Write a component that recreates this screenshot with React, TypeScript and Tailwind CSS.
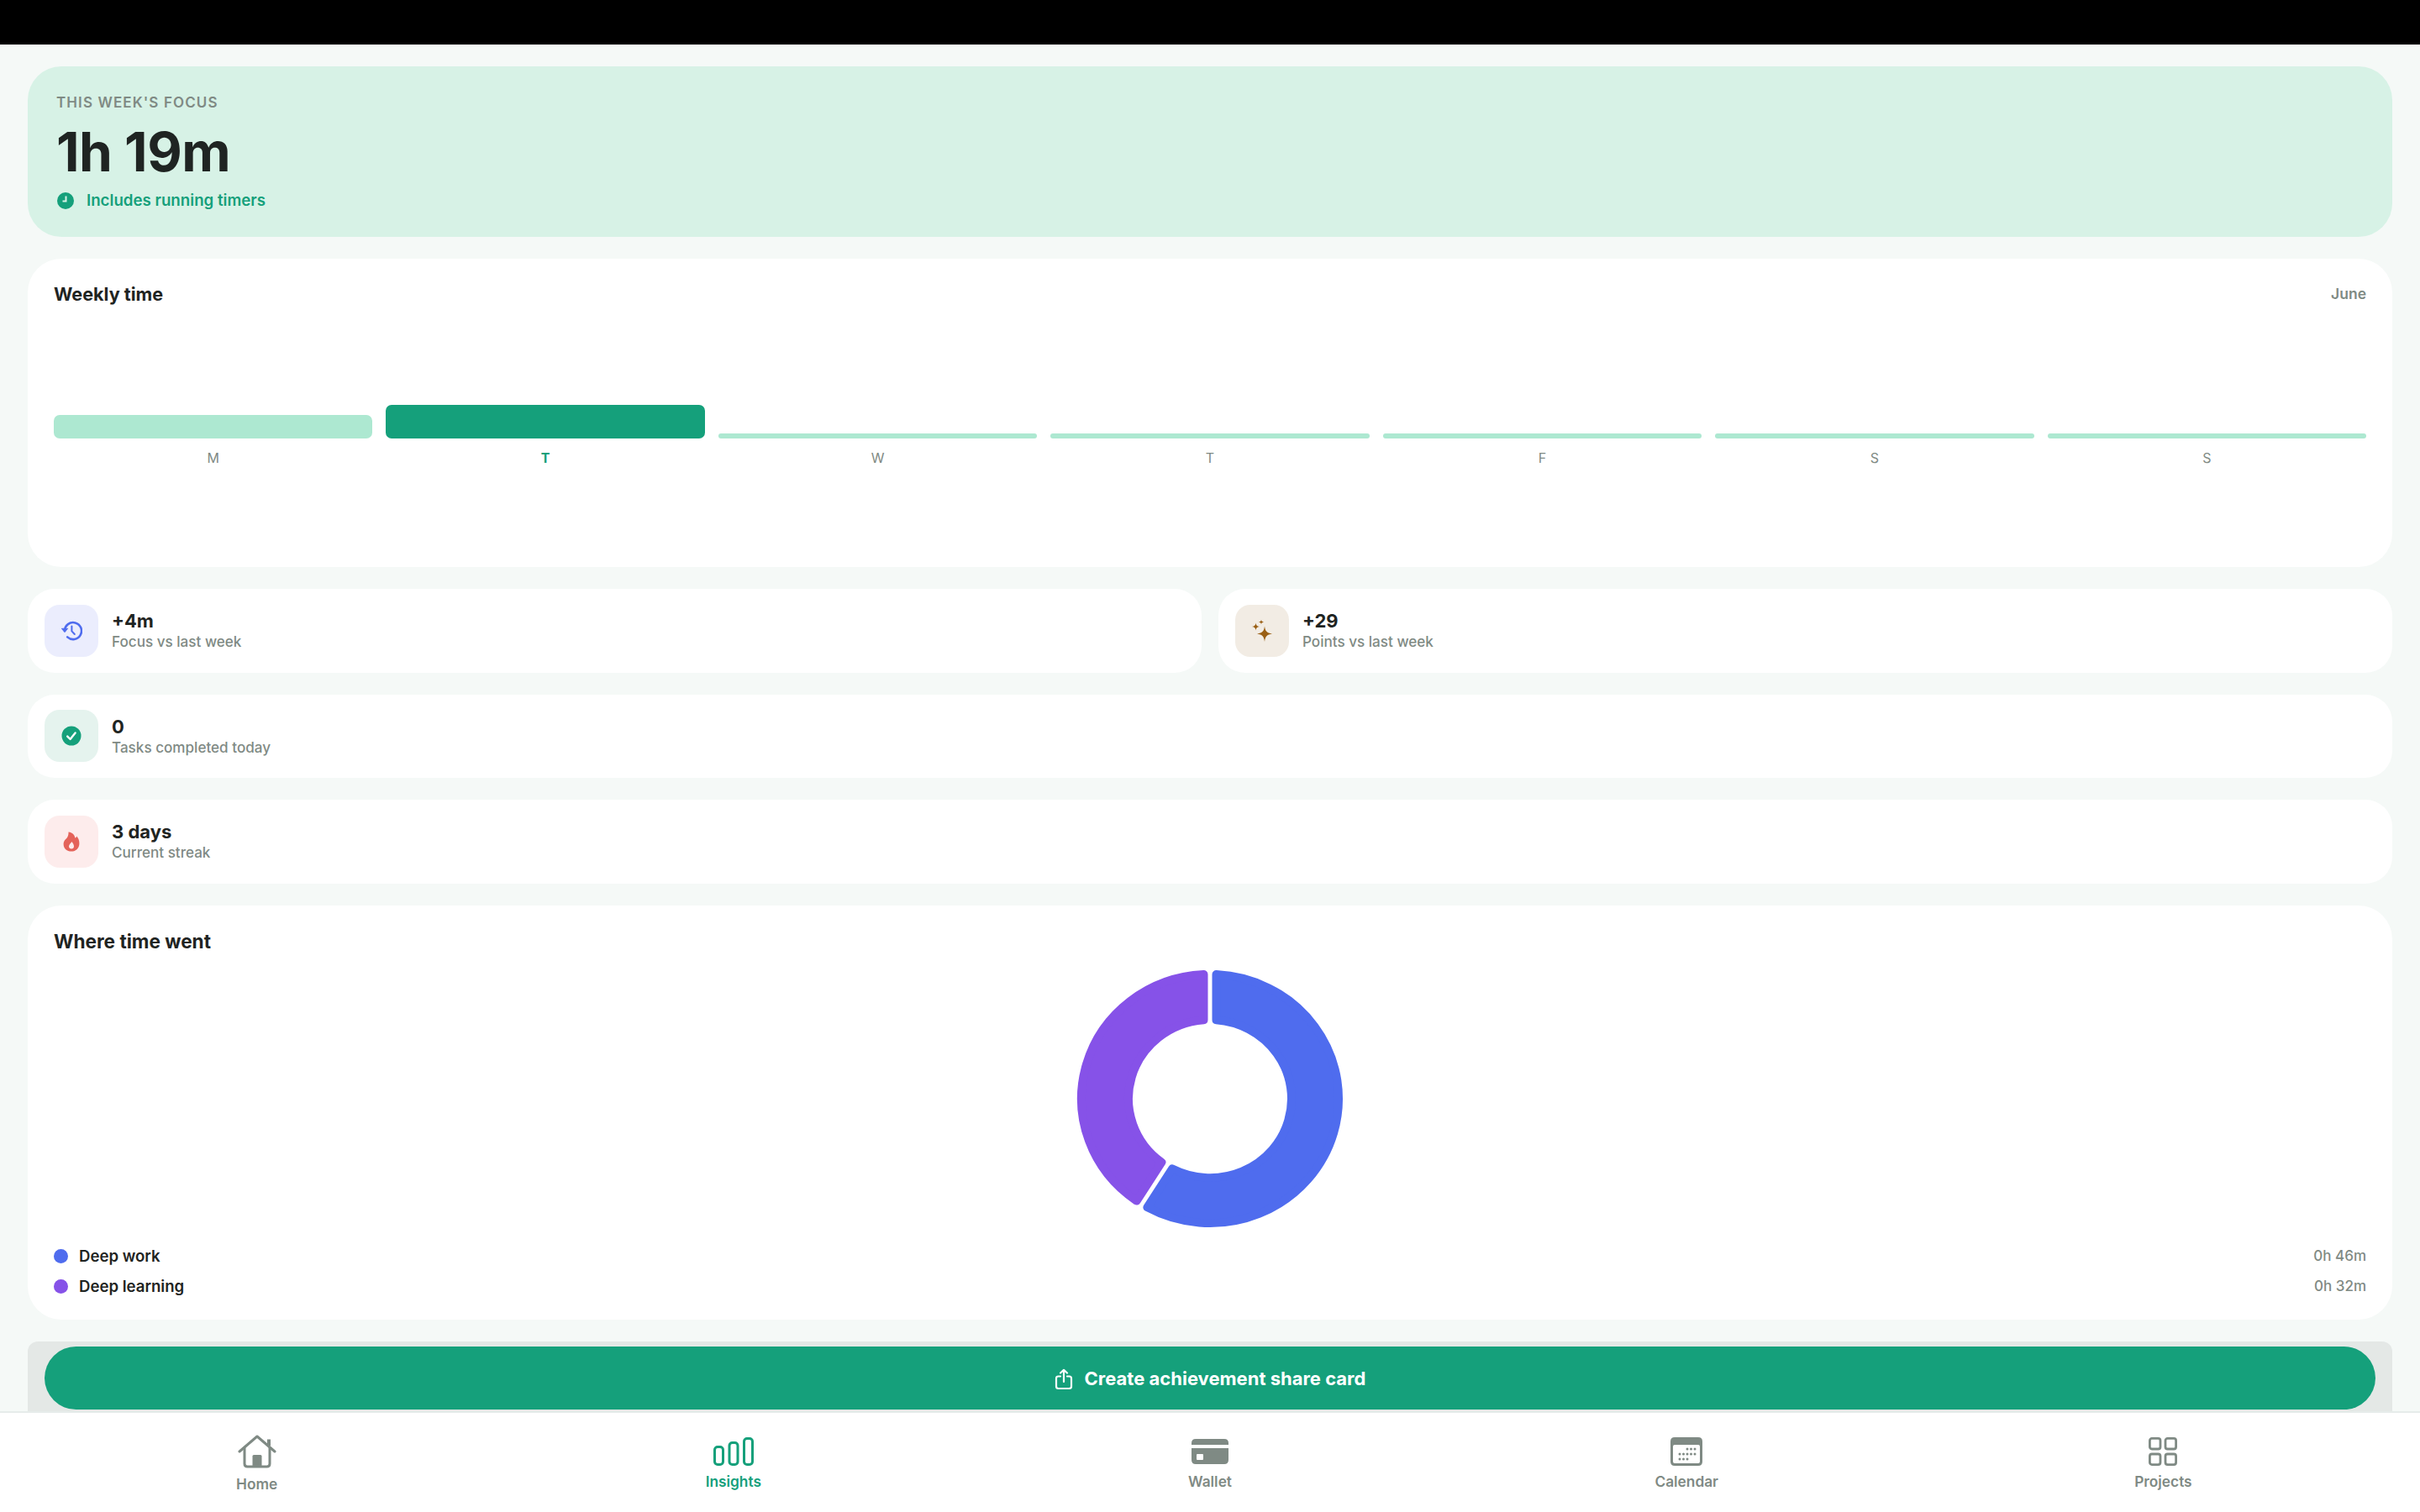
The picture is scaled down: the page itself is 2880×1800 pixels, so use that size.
import React from "react";

const F = { fontFamily: "Inter, 'Liberation Sans', sans-serif" };

function sector(a0: number, a1: number, R: number, r: number, off: number) {
  const pt = (rad: number, deg: number) => {
    const t = (deg * Math.PI) / 180;
    return `${(160 + rad * Math.sin(t)).toFixed(2)} ${(160 - rad * Math.cos(t)).toFixed(2)}`;
  };
  const dO = (Math.asin(off / R) * 180) / Math.PI;
  const dI = (Math.asin(off / r) * 180) / Math.PI;
  const large = a1 - a0 > 180 ? 1 : 0;
  return `M${pt(R, a0 + dO)} A${R} ${R} 0 ${large} 1 ${pt(R, a1 - dO)} L${pt(r, a1 - dI)} A${r} ${r} 0 ${large} 0 ${pt(r, a0 + dI)} Z`;
}

function Donut() {
  return (
    <svg width="320" height="310" viewBox="0 0 320 320" preserveAspectRatio="none">
      <path d={sector(0, 212, 153, 97, 7.5)} fill="#4f6cee" stroke="#4f6cee" strokeWidth="10" strokeLinejoin="round" />
      <path d={sector(212, 360, 153, 97, 7.5)} fill="#8652e8" stroke="#8652e8" strokeWidth="10" strokeLinejoin="round" />
    </svg>
  );
}

function HistoryIcon() {
  return (
    <svg width="26" height="26" viewBox="0 0 26 26" fill="none" stroke="#4f6cee" strokeWidth="2.6" strokeLinecap="round" strokeLinejoin="round">
      <path d="M5 13a10 10 0 1 1 3.2 7.4" />
      <path d="M1.6 10.6 L5 14.6 L8.4 10.6 Z" fill="#4f6cee" strokeWidth="1" />
      <path d="M13.4 7.6 V13.4 L16.8 17" strokeWidth="2" />
    </svg>
  );
}

function Sparkle() {
  return (
    <svg width="26" height="28" viewBox="0 0 26 28" fill="#9a5f14">
      <path d="M16 8.5 C16.8 14.5 18.5 16.2 25 17.5 C18.5 18.8 16.8 20.5 16 27 C15.2 20.5 13.5 18.8 7 17.5 C13.5 16.2 15.2 14.5 16 8.5Z" />
      <path d="M5.5 4.5 C5.9 7.5 6.6 8.3 10 9 C6.6 9.7 5.9 10.5 5.5 13.5 C5.1 10.5 4.4 9.7 1 9 C4.4 8.3 5.1 7.5 5.5 4.5Z" />
      <path d="M12 0.5 C12.2 2.5 12.7 3 15 3.5 C12.7 4 12.2 4.5 12 6.5 C11.8 4.5 11.3 4 9 3.5 C11.3 3 11.8 2.5 12 0.5Z" />
    </svg>
  );
}

function CheckIcon() {
  return (
    <svg width="24" height="24" viewBox="0 0 24 24">
      <circle cx="12" cy="12" r="11.5" fill="#15a07b" />
      <path d="M7.2 12.6 L10.6 16 L16.6 8.4" fill="none" stroke="#fff" strokeWidth="2.4" strokeLinecap="round" strokeLinejoin="round" />
    </svg>
  );
}

function FlameIcon() {
  return (
    <svg width="20" height="24" viewBox="0 0 20 24">
      <path fillRule="evenodd" fill="#e4635a" d="M6.5 0.5 C12 1 14 5 14.4 7.6 C15.6 7.2 16 6.4 16.2 5.6 C18.6 8 19.4 11 19.4 14 C19.4 19.8 15.4 23.6 10 23.6 C4.6 23.6 0.6 20 0.6 15 C0.6 10.6 3.6 9 5 7 C6.2 5.2 6.6 3 6.5 0.5Z M10.4 12 C9.6 14 7 15 7 17.6 C7 19.4 8.4 20.6 10 20.6 C11.8 20.6 13 19.4 13 17.6 C13 15.4 11.6 13.6 10.4 12Z" />
    </svg>
  );
}

function HomeIcon() {
  return (
    <svg width="46" height="40" viewBox="0 0 46 40" fill="none" stroke="#7f8a84" strokeWidth="3" strokeLinecap="round" strokeLinejoin="round">
      <path d="M2 20 L23 2 L44 20" />
      <path d="M37 13 V5.5" strokeWidth="4" strokeLinecap="butt" />
      <path d="M8 16 V34.5 Q8 38 11.5 38 H34.5 Q38 38 38 34.5 V16" />
      <rect x="17.5" y="24" width="11" height="14" rx="1.5" fill="#7f8a84" stroke="none" />
    </svg>
  );
}

function BarsIcon() {
  return (
    <svg width="48" height="34" viewBox="0 0 48 34" fill="none" stroke="#15a07b" strokeWidth="3">
      <rect x="1.5" y="11.5" width="10" height="21" rx="3.5" />
      <rect x="19" y="6.5" width="10" height="26" rx="3.5" />
      <rect x="36.5" y="1.5" width="10" height="31" rx="3.5" />
    </svg>
  );
}

function WalletIcon() {
  return (
    <svg width="44" height="32" viewBox="0 0 44 32">
      <path fill="#7f8a84" d="M0 6 Q0 1 5 1 H39 Q44 1 44 6 V8 H0Z" />
      <path fill="#7f8a84" fillRule="evenodd" d="M0 12 H44 V26 Q44 31 39 31 H5 Q0 31 0 26Z M7 19 Q6 19 6 20 V25 Q6 26 7 26 H13 Q14 26 14 25 V20 Q14 19 13 19Z" />
    </svg>
  );
}

function CalendarIcon() {
  const dots: [number, number][] = [
    [20, 14], [24.5, 14], [29, 14], [11, 20], [15.5, 20], [20, 20], [24.5, 20], [29, 20], [11, 26], [15.5, 26], [20, 26],
  ];
  return (
    <svg width="38" height="34" viewBox="0 0 38 34">
      <path fillRule="evenodd" fill="#7f8a84" d="M5 0 H33 Q38 0 38 5 V29 Q38 34 33 34 H5 Q0 34 0 29 V5 Q0 0 5 0Z M5 9 Q3 9 3 11 V29 Q3 31 5 31 H33 Q35 31 35 29 V11 Q35 9 33 9Z" />
      {dots.map(([x, y]) => (
        <circle key={`${x}-${y}`} cx={x} cy={y} r="1.5" fill="#7f8a84" />
      ))}
    </svg>
  );
}

function GridIcon() {
  return (
    <svg width="34" height="34" viewBox="0 0 34 34" fill="none" stroke="#7f8a84" strokeWidth="2.8">
      <rect x="1.4" y="1.4" width="12.6" height="12.6" rx="2.5" />
      <rect x="20" y="1.4" width="12.6" height="12.6" rx="2.5" />
      <rect x="1.4" y="20" width="12.6" height="12.6" rx="2.5" />
      <rect x="20" y="20" width="12.6" height="12.6" rx="2.5" />
    </svg>
  );
}

function ShareIcon() {
  return (
    <svg width="22" height="26" viewBox="0 0 22 26" fill="none" stroke="#fff" strokeWidth="2.2" strokeLinecap="round" strokeLinejoin="round">
      <path d="M7 9.5 H4.5 Q2 9.5 2 12 V21.5 Q2 24 4.5 24 H17.5 Q20 24 20 21.5 V12 Q20 9.5 17.5 9.5 H15" />
      <path d="M11 16 V2 M7 5.5 L11 1.8 L15 5.5" />
    </svg>
  );
}

function Stat({ tile, icon, value, label, className }: { tile: string; icon: React.ReactNode; value: string; label: string; className?: string }) {
  return (
    <div className={`flex h-[99.6px] items-center gap-4 rounded-[32px] bg-white pl-5 ${className ?? ""}`}>
      <div className={`flex h-[62px] w-[64px] items-center justify-center rounded-[18px] ${tile}`}>{icon}</div>
      <div className="flex flex-col">
        <div className="text-[22px] leading-[26px] font-bold text-[#1f2422]">{value}</div>
        <div className="text-[17.1px] leading-[23px] font-medium text-[#7f8a84]">{label}</div>
      </div>
    </div>
  );
}

function Day({ h, label, active }: { h: string; label: string; active?: boolean }) {
  return (
    <div className="flex flex-col items-center">
      <div className="flex h-[60px] w-full items-end">
        <div className={`w-full ${h} ${active ? "bg-[#15a07b]" : "bg-[#ade8d1]"}`} />
      </div>
      <div className={`mt-[14px] text-[16px] leading-[18px] ${active ? "font-bold text-[#15a07b]" : "font-normal text-[#7f8a84]"}`}>{label}</div>
    </div>
  );
}

function NavItem({ icon, label, active, labelClass }: { icon: React.ReactNode; label: string; active?: boolean; labelClass: string }) {
  return (
    <div className="flex flex-col items-center">
      <div className="flex h-[40px] items-center justify-center">{icon}</div>
      <div className={`text-[17.3px] leading-[22px] font-semibold ${labelClass} ${active ? "text-[#15a07b]" : "text-[#7f8a84]"}`}>{label}</div>
    </div>
  );
}

export default function App() {
  return (
    <div style={F} className="flex h-[1800px] w-[2880px] flex-col overflow-hidden bg-[#f5f9f7]">
      <div className="h-[53px] shrink-0 bg-black" />
      <main className="flex min-h-0 flex-1 flex-col gap-[26px] px-[33px] pt-[26px]">
        <section className="flex h-[203px] shrink-0 flex-col rounded-[40px] bg-[#d7f2e6] pt-[32px] pl-[34px]">
          <div className="text-[17px] leading-[22px] font-semibold tracking-[1.1px] text-[#7f8a84]">THIS WEEK'S FOCUS</div>
          <div className="mt-[13px] text-[64px] leading-[70px] font-bold tracking-[-0.5px] text-[#1f2422]">1h 19m</div>
          <div className="mt-[11px] flex items-center gap-[15px]">
            <svg width="20" height="20" viewBox="0 0 20 20" className="ml-[1px]">
              <circle cx="10" cy="10" r="10" fill="#15a07b" />
              <path d="M10.5 4.5 V10.5 H6.5" fill="none" stroke="#d7f2e6" strokeWidth="2" />
            </svg>
            <div className="text-[18.7px] leading-[24px] font-semibold text-[#15a07b]">Includes running timers</div>
          </div>
        </section>

        <section className="flex h-[367px] shrink-0 flex-col rounded-[40px] bg-white px-[31px] pt-[28px]">
          <div className="flex items-center justify-between">
            <div className="text-[21.6px] leading-[28px] font-bold text-[#1f2422]">Weekly time</div>
            <div className="text-[17.5px] font-semibold text-[#7f8a84]">June</div>
          </div>
          <div className="mt-[98px] grid grid-cols-7 gap-4">
            <Day h="h-[28px] rounded-[7px]" label="M" />
            <Day h="h-[40px] rounded-[7px]" label="T" active />
            <Day h="h-[6px] rounded-[3px]" label="W" />
            <Day h="h-[6px] rounded-[3px]" label="T" />
            <Day h="h-[6px] rounded-[3px]" label="F" />
            <Day h="h-[6px] rounded-[3px]" label="S" />
            <Day h="h-[6px] rounded-[3px]" label="S" />
          </div>
        </section>

        <div className="grid shrink-0 grid-cols-2 gap-5">
          <Stat tile="bg-[#ebedfd]" icon={<HistoryIcon />} value="+4m" label="Focus vs last week" />
          <Stat tile="bg-[#f2ece4]" icon={<Sparkle />} value="+29" label="Points vs last week" />
        </div>
        <Stat className="shrink-0" tile="bg-[#e5f3ee]" icon={<CheckIcon />} value="0" label="Tasks completed today" />
        <Stat className="shrink-0" tile="bg-[#fdecec]" icon={<FlameIcon />} value="3 days" label="Current streak" />

        <section className="flex h-[493px] shrink-0 flex-col rounded-[40px] bg-white px-[31px] pt-[28px]">
          <div className="text-[22.6px] leading-[30px] font-bold text-[#1f2422]">Where time went</div>
          <div className="mt-[17px] flex justify-center">
            <Donut />
          </div>
          <div className="mt-[21px] flex flex-col gap-[12px]">
            <div className="flex h-[24px] items-center justify-between">
              <div className="flex items-center gap-[13px]">
                <span className="h-[17px] w-[17px] rounded-full bg-[#4f6cee]" />
                <span className="text-[18.6px] font-semibold text-[#1f2422]">Deep work</span>
              </div>
              <span className="text-[17px] font-medium text-[#7f8a84]">0h 46m</span>
            </div>
            <div className="flex h-[24px] items-center justify-between">
              <div className="flex items-center gap-[13px]">
                <span className="h-[17px] w-[17px] rounded-full bg-[#8652e8]" />
                <span className="text-[18.6px] font-semibold text-[#1f2422]">Deep learning</span>
              </div>
              <span className="text-[17px] font-medium text-[#7f8a84]">0h 32m</span>
            </div>
          </div>
        </section>

        <div className="flex min-h-0 flex-1 rounded-t-[12px] bg-[#e4e8e6] px-[20px] pt-[6px]">
          <button className="flex h-[75px] w-full items-center justify-center gap-[14px] rounded-full bg-[#15a07b] pt-[3px] text-[22px] font-bold text-white">
            <ShareIcon />
            Create achievement share card
          </button>
        </div>
      </main>
      <nav className="grid h-[120px] shrink-0 grid-cols-5 border-t-[2px] border-[#e6ecea] bg-white px-[22px] pt-[26px]">
        <NavItem icon={<HomeIcon />} label="Home" labelClass="mt-[8px]" />
        <NavItem icon={<BarsIcon />} label="Insights" active labelClass="mt-[5px]" />
        <NavItem icon={<WalletIcon />} label="Wallet" labelClass="mt-[5px]" />
        <NavItem icon={<CalendarIcon />} label="Calendar" labelClass="mt-[5px]" />
        <NavItem icon={<GridIcon />} label="Projects" labelClass="mt-[5px]" />
      </nav>
    </div>
  );
}
